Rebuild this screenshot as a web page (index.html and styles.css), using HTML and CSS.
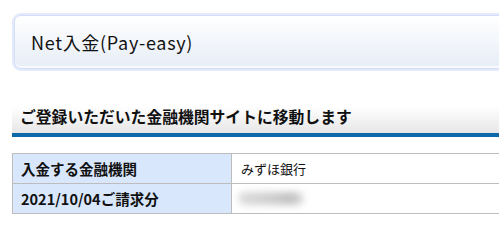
FILE: index.html
```html
<!DOCTYPE html>
<html lang="ja">
<head>
<meta charset="utf-8">
<title>Net入金(Pay-easy)</title>
<link rel="stylesheet" href="styles.css">
</head>
<body>
<div class="page">
  <div class="title-box">
    <div class="title-inner">
      <h1 class="title">Net入金(Pay-easy)</h1>
    </div>
  </div>
  <h2 class="section-head">ご登録いただいた金融機関サイトに移動します</h2>
  <table class="info">
    <tr>
      <th>入金する金融機関</th>
      <td>みずほ銀行</td>
    </tr>
    <tr>
      <th>2021/10/04ご請求分</th>
      <td><span class="blurred"></span></td>
    </tr>
  </table>
</div>
</body>
</html>
```
FILE: styles.css
```css
html, body {
  margin: 0;
  padding: 0;
  overflow: hidden;
  background: #fff;
}
body {
  font-family: "Noto Sans CJK JP", "Noto Sans", sans-serif;
  color: #111;
}
.page {
  padding: 13px 0 0 12px;
  width: 540px;
}
.title-box {
  border: 2px solid #e3eafb;
  border-radius: 9px;
  background: #f3f6fd;
}
.title-inner {
  border: 1px solid #d4def6;
  border-radius: 7px;
  background: linear-gradient(#ffffff, #e6edf6);
  height: 52px;
  display: flex;
  align-items: center;
  padding-left: 16px;
  box-shadow: inset 0 -2px 0 #f7f9fe;
}
.title {
  margin: 0;
  font-size: 18px;
  font-weight: normal;
  line-height: 1;
  letter-spacing: 0.7px;
}
.section-head {
  margin: 29px 0 0 0;
  padding: 7px 0 6px 8px;
  font-size: 15.8px;
  font-weight: bold;
  line-height: 20px;
  background: linear-gradient(#ffffff 20%, #e6e6e6);
  border-bottom: 4px solid #0b68a9;
}
.info {
  margin-top: 16px;
  border-collapse: collapse;
  width: 100%;
  font-size: 13px;
}
.info th, .info td {
  border: 1px solid #bdbdbd;
  height: 29px;
  padding: 0 9px;
  text-align: left;
}
.info th {
  width: 201px;
  background: #d8e7fb;
  font-weight: bold;
  font-size: 14.5px;
  padding-left: 8px;
}
.info td {
  background: #fff;
  font-weight: normal;
}
.blurred {
  display: block;
  width: 66px;
  height: 13px;
  margin-left: -3px;
  border-radius: 7px;
  background: linear-gradient(90deg, #dcdcdc, #cccccc 55%, #c0c0c0 80%, #dddddd);
  filter: blur(3.5px);
}
```
